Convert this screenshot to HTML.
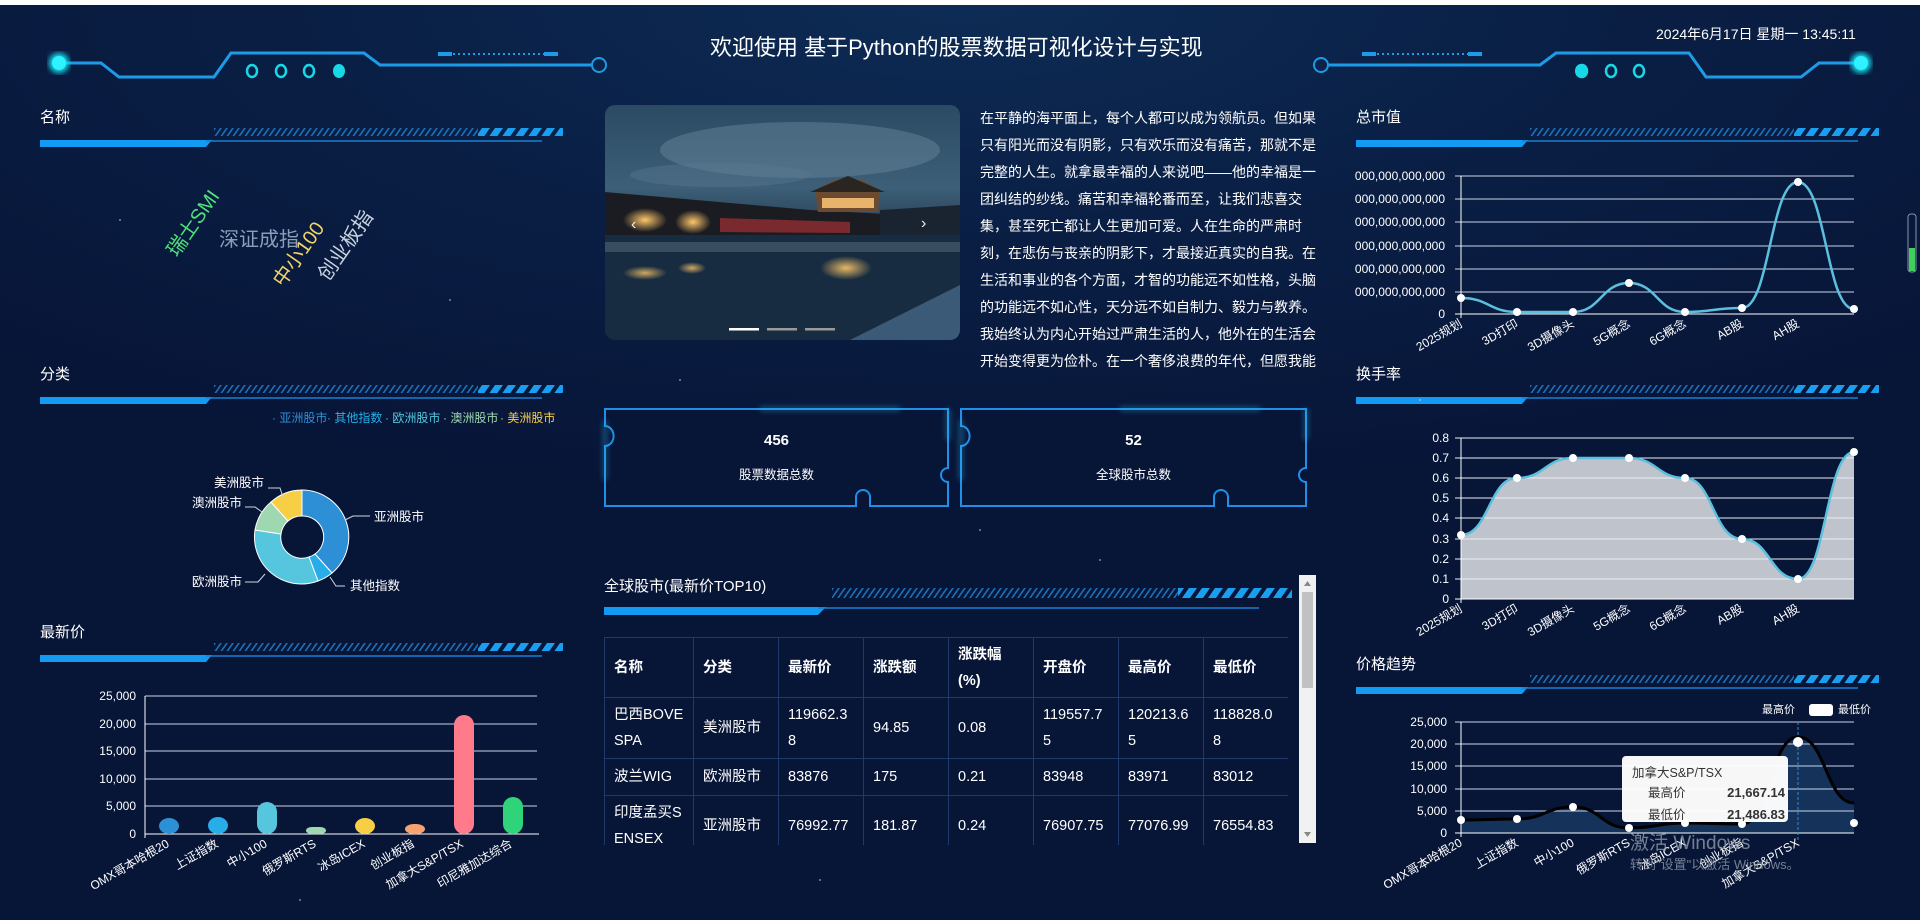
<!DOCTYPE html>
<html><head><meta charset="utf-8"><style>
*{margin:0;padding:0;box-sizing:border-box}
html,body{width:1920px;height:920px;overflow:hidden}
body{background:radial-gradient(ellipse 1400px 500px at 960px 0px,#0d2c55 0%,#0a1f45 45%,#071537 100%);font-family:"Liberation Sans","Noto Sans CJK SC",sans-serif;color:#fff;position:relative}
.a{position:absolute}
.t{position:absolute;font-size:16px;color:#fff;white-space:nowrap}
.para{position:absolute;left:980px;top:105px;width:342px;font-size:14px;line-height:27px;color:#fff}
table{border-collapse:collapse;position:absolute;left:604px;top:637px;width:684px;font-size:14.5px;table-layout:fixed}
td{border:1px solid #1f3a6a;padding:0 9px;color:#fff;vertical-align:middle;line-height:26px;word-break:break-all}
th{border:1px solid #1f3a6a;padding:0 9px;text-align:left;font-weight:bold;line-height:26px}
</style></head><body>
<div class="a" style="left:0;top:0;width:1920px;height:5px;background:#fff"></div>

<svg class="a" style="left:0;top:0" width="1920" height="920" viewBox="0 0 1920 920">
<defs>
<pattern id="hat" width="6" height="10" patternUnits="userSpaceOnUse" patternTransform="skewX(-35)"><rect width="2" height="10" fill="#1a6fb8"/></pattern>
<pattern id="dsh" width="13" height="10" patternUnits="userSpaceOnUse" patternTransform="skewX(-35)"><rect width="8" height="10" fill="#1a9ef0"/></pattern>
<filter id="gl"><feGaussianBlur stdDeviation="3"/></filter>
<linearGradient id="sky" x1="0" y1="0" x2="0" y2="1"><stop offset="0" stop-color="#2b4a63"/><stop offset="0.35" stop-color="#3d5f78"/><stop offset="0.6" stop-color="#1e3448"/><stop offset="1" stop-color="#0f2236"/></linearGradient>
<radialGradient id="lt"><stop offset="0" stop-color="#ffc76a"/><stop offset="1" stop-color="#ffc76a" stop-opacity="0"/></radialGradient>
<clipPath id="ic"><rect x="605" y="105" width="355" height="235" rx="10"/></clipPath>
</defs>

<g fill="none" stroke="#1e9be6" stroke-width="3">
<path d="M59 63 H101 L119 77 H214 L231 53 H364 L380 65 H591"/>
<path d="M1861 63 H1819 L1801 77 H1706 L1689 53 H1556 L1540 65 H1329"/>
</g>
<g fill="none" stroke="#1e9be6" stroke-width="2"><circle cx="599" cy="65" r="7"/><circle cx="1321" cy="65" r="7"/></g>
<g stroke="#1e9be6" stroke-width="2" stroke-dasharray="2 3"><path d="M438 54 H558"/><path d="M1362 54 H1482"/></g>
<g fill="#1e9be6"><rect x="438" y="52" width="14" height="4"/><rect x="544" y="52" width="14" height="4"/><rect x="1362" y="52" width="14" height="4"/><rect x="1468" y="52" width="14" height="4"/></g>
<g fill="none" stroke="#18d8e8" stroke-width="2.5"><ellipse cx="252" cy="71" rx="5" ry="6"/><ellipse cx="281" cy="71" rx="5" ry="6"/><ellipse cx="309" cy="71" rx="5" ry="6"/><ellipse cx="1639" cy="71" rx="5" ry="6"/><ellipse cx="1611" cy="71" rx="5" ry="6"/><ellipse cx="1582" cy="71" rx="5" ry="6"/></g>
<g fill="#18d8e8"><ellipse cx="339" cy="71" rx="6" ry="7"/><ellipse cx="1581" cy="71" rx="6" ry="7"/></g>
<circle cx="59" cy="63" r="10" fill="#18e0f0" filter="url(#gl)"/><circle cx="59" cy="63" r="7" fill="#2ef2ff"/>
<circle cx="1861" cy="63" r="10" fill="#18e0f0" filter="url(#gl)"/><circle cx="1861" cy="63" r="7" fill="#2ef2ff"/>

<g id="bars">
<g transform="translate(40,128)"><rect x="174" y="0" width="264" height="8" fill="url(#hat)"/><rect x="438" y="0" width="85" height="8" fill="url(#dsh)"/><path d="M0 12 H172 L166 19 H0Z" fill="#139af2"/><path d="M166 13 H502" stroke="#1780d0" stroke-width="1.5"/></g>
<g transform="translate(40,385)"><rect x="174" y="0" width="264" height="8" fill="url(#hat)"/><rect x="438" y="0" width="85" height="8" fill="url(#dsh)"/><path d="M0 12 H172 L166 19 H0Z" fill="#139af2"/><path d="M166 13 H502" stroke="#1780d0" stroke-width="1.5"/></g>
<g transform="translate(40,643)"><rect x="174" y="0" width="264" height="8" fill="url(#hat)"/><rect x="438" y="0" width="85" height="8" fill="url(#dsh)"/><path d="M0 12 H172 L166 19 H0Z" fill="#139af2"/><path d="M166 13 H502" stroke="#1780d0" stroke-width="1.5"/></g>
<g transform="translate(1356,128)"><rect x="174" y="0" width="264" height="8" fill="url(#hat)"/><rect x="438" y="0" width="85" height="8" fill="url(#dsh)"/><path d="M0 12 H172 L166 19 H0Z" fill="#139af2"/><path d="M166 13 H502" stroke="#1780d0" stroke-width="1.5"/></g>
<g transform="translate(1356,385)"><rect x="174" y="0" width="264" height="8" fill="url(#hat)"/><rect x="438" y="0" width="85" height="8" fill="url(#dsh)"/><path d="M0 12 H172 L166 19 H0Z" fill="#139af2"/><path d="M166 13 H502" stroke="#1780d0" stroke-width="1.5"/></g>
<g transform="translate(1356,675)"><rect x="174" y="0" width="264" height="8" fill="url(#hat)"/><rect x="438" y="0" width="85" height="8" fill="url(#dsh)"/><path d="M0 12 H172 L166 19 H0Z" fill="#139af2"/><path d="M166 13 H502" stroke="#1780d0" stroke-width="1.5"/></g>
<g transform="translate(604,588)"><rect x="228" y="0" width="346" height="10" fill="url(#hat)"/><rect x="574" y="0" width="114" height="10" fill="url(#dsh)"/><path d="M0 19 H222 L214 27 H0Z" fill="#139af2"/><path d="M214 20 H655" stroke="#1780d0" stroke-width="1.5"/></g>
</g>

<g clip-path="url(#ic)">
<rect x="605" y="105" width="355" height="235" fill="url(#sky)"/>
<ellipse cx="800" cy="150" rx="140" ry="28" fill="#6b8aa0" opacity="0.45"/>
<ellipse cx="720" cy="175" rx="90" ry="12" fill="#5a7a90" opacity="0.4"/>
<path d="M605 192 L810 210 L960 218 V235 H605Z" fill="#1b1c22"/>
<path d="M720 218 L850 222 V233 L720 232Z" fill="#7a2a2e"/>
<path d="M815 190 L835 180 L862 180 L880 190 L878 212 L818 212Z" fill="#6b4a32"/>
<rect x="822" y="198" width="52" height="10" fill="#e9b36b"/>
<path d="M810 192 L848 176 L885 192Z" fill="#2a2520"/>
<path d="M880 210 L960 205 V235 L880 235Z" fill="#1a2430"/>
<ellipse cx="645" cy="220" rx="22" ry="12" fill="url(#lt)"/>
<ellipse cx="693" cy="222" rx="18" ry="12" fill="url(#lt)"/>
<rect x="605" y="235" width="355" height="105" fill="#172c40"/>
<rect x="605" y="242" width="355" height="10" fill="#5a6f80" opacity="0.5"/>
<ellipse cx="645" cy="273" rx="22" ry="7" fill="url(#lt)" opacity="0.8"/>
<ellipse cx="692" cy="268" rx="14" ry="6" fill="url(#lt)" opacity="0.8"/>
<ellipse cx="846" cy="268" rx="26" ry="12" fill="url(#lt)" opacity="0.9"/>
<path d="M850 340 L960 285 V340Z" fill="#3b5a78"/>
<rect x="729" y="328" width="30" height="2.5" fill="#fff"/><rect x="767" y="328" width="30" height="2.5" fill="#999"/><rect x="805" y="328" width="30" height="2.5" fill="#999"/>
<text x="631" y="229" font-size="16" fill="#eee" font-family="Liberation Sans">‹</text>
<text x="921" y="228" font-size="16" fill="#eee" font-family="Liberation Sans">›</text>
</g>

<g fill="#071537" stroke="#1e90e8" stroke-width="2">
<path d="M605 409 H948 V468 A7 7 0 0 0 948 482 V506 H870 V497 A7 7 0 0 0 856 497 V506 H605 V446 A6 7 0 0 0 605 426Z"/>
<path d="M961 409 H1306 V468 A7 7 0 0 0 1306 482 V506 H1228 V497 A7 7 0 0 0 1214 497 V506 H961 V446 A6 7 0 0 0 961 426Z"/>
</g>
<g fill="none" stroke="#35c6ff" stroke-width="3" opacity="0.5" filter="url(#gl)">
<path d="M605 420 V480 M948 409 V440 M760 409 H900 M1306 409 V440 M1120 409 H1260 M961 420 V480"/>
</g>

<g font-family="Liberation Sans,Noto Sans CJK SC,sans-serif">
<text transform="translate(177,258) rotate(-55)" font-size="20" fill="#4fe07a">瑞士SMI</text>
<text x="219" y="246" font-size="20" fill="#8a9fb8">深证成指</text>
<text transform="translate(283,288) rotate(-55)" font-size="20" fill="#f2d36a">中小100</text>
<text transform="translate(328,282) rotate(-55)" font-size="20" fill="#c9d3e0">创业板指</text>
</g>

<g transform="translate(302,537)">
<circle r="34.5" fill="none" stroke-width="25" stroke="#55c6dd"/>
<path d="M0 -47 A47 47 0 0 1 30 36 L13 17 A21 21 0 0 0 0 -21Z" fill="#2d8fd5" stroke="#fff" stroke-width="1"/>
<path d="M30 36 A47 47 0 0 1 16 44 L7 20 A21 21 0 0 0 13 17Z" fill="#27aee8" stroke="#fff" stroke-width="1"/>
<path d="M16 44 A47 47 0 0 1 -47 -7 L-21 -3 A21 21 0 0 0 7 20Z" fill="#55c6dd" stroke="#fff" stroke-width="1"/>
<path d="M-47 -7 A47 47 0 0 1 -31 -35 L-14 -16 A21 21 0 0 0 -21 -3Z" fill="#9fd8b0" stroke="#fff" stroke-width="1"/>
<path d="M-31 -35 A47 47 0 0 1 0 -47 L0 -21 A21 21 0 0 0 -14 -16Z" fill="#f7cf45" stroke="#fff" stroke-width="1"/>
</g>
<g stroke="#cfd8e6" fill="none" stroke-width="1"><path d="M345 520 L353 516 H370"/><path d="M330 577 L336 586 H345"/><path d="M265 574 L258 582 H245"/><path d="M262 512 L255 507 H245"/><path d="M283 497 L280 488 H268"/></g>
<g font-size="12.5" fill="#fff" font-family="Liberation Sans,Noto Sans CJK SC,sans-serif">
<text x="374" y="521">亚洲股市</text><text x="350" y="590">其他指数</text><text x="192" y="586">欧洲股市</text><text x="192" y="507">澳洲股市</text><text x="214" y="487">美洲股市</text>
</g>
<g font-size="12" font-family="Liberation Sans,Noto Sans CJK SC,sans-serif">
<text x="272" y="422" fill="#2d8fd5">· 亚洲股市</text><text x="327" y="422" fill="#27aee8">· 其他指数</text><text x="385" y="422" fill="#55c6dd">· 欧洲股市</text><text x="443" y="422" fill="#9fd8b0">· 澳洲股市</text><text x="500" y="422" fill="#f7cf45">· 美洲股市</text>
</g>

<g stroke="#c9d4ea" stroke-width="1"><path d="M145 696 H537 M145 724 H537 M145 751 H537 M145 779 H537 M145 806 H537"/><path d="M145 834 H539 M145 696 V838" stroke="#fff"/></g>
<g font-size="12" fill="#fff" text-anchor="end" font-family="Liberation Sans,sans-serif"><text x="136" y="700">25,000</text><text x="136" y="728">20,000</text><text x="136" y="755">15,000</text><text x="136" y="783">10,000</text><text x="136" y="810">5,000</text><text x="136" y="838">0</text></g>
<g><rect x="159" y="818" width="20" height="16" rx="10" fill="#2d8fd5"/><rect x="208" y="817" width="20" height="17" rx="10" fill="#27aee8"/><rect x="257" y="802" width="20" height="32" rx="10" fill="#55c6dd"/><rect x="306" y="827" width="20" height="7" rx="6" fill="#9fd8b0"/><rect x="355" y="818" width="20" height="16" rx="10" fill="#f7cf45"/><rect x="405" y="824" width="20" height="10" rx="9" fill="#f9a271"/><rect x="454" y="715" width="20" height="119" rx="10" fill="#ff7b8c"/><rect x="503" y="797" width="20" height="37" rx="10" fill="#2fd47a"/></g>
<g font-size="12" fill="#fff" text-anchor="end" font-family="Liberation Sans,Noto Sans CJK SC,sans-serif">
<text transform="translate(170,846) rotate(-30)">OMX哥本哈根20</text><text transform="translate(219,846) rotate(-30)">上证指数</text><text transform="translate(268,846) rotate(-30)">中小100</text><text transform="translate(317,846) rotate(-30)">俄罗斯RTS</text><text transform="translate(366,846) rotate(-30)">冰岛ICEX</text><text transform="translate(415,846) rotate(-30)">创业板指</text><text transform="translate(464,846) rotate(-30)">加拿大S&amp;P/TSX</text><text transform="translate(513,846) rotate(-30)">印尼雅加达综合</text>
</g>

<g stroke="#c9d4ea" stroke-width="1"><path d="M1455 176 H1854 M1455 199 H1854 M1455 222 H1854 M1455 246 H1854 M1455 269 H1854 M1455 292 H1854"/><path d="M1455 314 H1854 M1461 176 V318" stroke="#fff"/></g>
<g font-size="12" fill="#fff" text-anchor="end" font-family="Liberation Sans,sans-serif"><text x="1445" y="180">000,000,000,000</text><text x="1445" y="203">000,000,000,000</text><text x="1445" y="226">000,000,000,000</text><text x="1445" y="250">000,000,000,000</text><text x="1445" y="273">000,000,000,000</text><text x="1445" y="296">000,000,000,000</text><text x="1445" y="318">0</text></g>
<path d="M1461 298 C1489 298 1489 312 1517 312 C1545 312 1545 312 1573 312 C1601 312 1601 283 1629 283 C1657 283 1657 312 1685 312 C1713 312 1713 308 1742 308 C1770 308 1770 182 1798 182 C1826 182 1826 309 1854 309" fill="none" stroke="#5bc0de" stroke-width="2.5"/>
<g fill="#fff"><circle cx="1461" cy="298" r="4"/><circle cx="1517" cy="312" r="4"/><circle cx="1573" cy="312" r="4"/><circle cx="1629" cy="283" r="4"/><circle cx="1685" cy="312" r="4"/><circle cx="1742" cy="308" r="4"/><circle cx="1798" cy="182" r="4"/><circle cx="1854" cy="309" r="4"/></g>

<path d="M1461 535 C1489 535 1489 478 1517 478 C1545 478 1545 458 1573 458 C1601 458 1601 458 1629 458 C1657 458 1657 478 1685 478 C1713 478 1713 539 1742 539 C1770 539 1770 579 1798 579 C1826 579 1826 452 1854 452 V599 H1461Z" fill="#bfc3cc"/>
<g stroke="#e8edf5" stroke-width="1"><path d="M1455 438 H1854 M1455 458 H1854 M1455 478 H1854 M1455 498 H1854 M1455 518 H1854 M1455 539 H1854 M1455 559 H1854 M1455 579 H1854"/><path d="M1455 599 H1854 M1461 438 V603" stroke="#fff"/></g>
<path d="M1461 535 C1489 535 1489 478 1517 478 C1545 478 1545 458 1573 458 C1601 458 1601 458 1629 458 C1657 458 1657 478 1685 478 C1713 478 1713 539 1742 539 C1770 539 1770 579 1798 579 C1826 579 1826 452 1854 452" fill="none" stroke="#5bc0de" stroke-width="2.5"/>
<g fill="#fff"><circle cx="1461" cy="535" r="4"/><circle cx="1517" cy="478" r="4"/><circle cx="1573" cy="458" r="4"/><circle cx="1629" cy="458" r="4"/><circle cx="1685" cy="478" r="4"/><circle cx="1742" cy="539" r="4"/><circle cx="1798" cy="579" r="4"/><circle cx="1854" cy="452" r="4"/></g>
<g font-size="12" fill="#fff" text-anchor="end" font-family="Liberation Sans,sans-serif"><text x="1449" y="442">0.8</text><text x="1449" y="462">0.7</text><text x="1449" y="482">0.6</text><text x="1449" y="502">0.5</text><text x="1449" y="522">0.4</text><text x="1449" y="543">0.3</text><text x="1449" y="563">0.2</text><text x="1449" y="583">0.1</text><text x="1449" y="603">0</text></g>

<path d="M1461 820 C1489 820 1489 819 1517 819 C1545 819 1545 807 1573 807 C1601 807 1601 828 1629 828 C1657 828 1657 823 1685 823 C1713 823 1713 824 1742 824 C1770 824 1770 737 1798 737 C1826 737 1826 803 1854 803 V833 H1461Z" fill="#16355e" opacity="0.9"/>
<g stroke="#c9d4ea" stroke-width="1"><path d="M1455 722 H1854 M1455 744 H1854 M1455 766 H1854 M1455 789 H1854 M1455 811 H1854"/><path d="M1455 833 H1854 M1461 722 V837" stroke="#fff"/></g>
<path d="M1798 722 V840" stroke="#2f8fd0" stroke-dasharray="3 2"/>
<path d="M1461 820 C1489 820 1489 819 1517 819 C1545 819 1545 807 1573 807 C1601 807 1601 828 1629 828 C1657 828 1657 823 1685 823 C1713 823 1713 824 1742 824 C1770 824 1770 737 1798 737 C1826 737 1826 803 1854 803" fill="none" stroke="#000" stroke-width="3"/>
<g fill="#fff"><circle cx="1461" cy="820" r="4"/><circle cx="1517" cy="819" r="4"/><circle cx="1573" cy="807" r="4"/><circle cx="1629" cy="828" r="4"/><circle cx="1685" cy="823" r="4"/><circle cx="1742" cy="824" r="4"/><circle cx="1798" cy="742" r="5"/><circle cx="1854" cy="823" r="4"/></g>
<g font-size="12" fill="#fff" text-anchor="end" font-family="Liberation Sans,sans-serif"><text x="1447" y="726">25,000</text><text x="1447" y="748">20,000</text><text x="1447" y="770">15,000</text><text x="1447" y="793">10,000</text><text x="1447" y="815">5,000</text><text x="1447" y="837">0</text></g>
<g font-size="11" fill="#fff" font-family="Liberation Sans,Noto Sans CJK SC,sans-serif"><text x="1762" y="713">最高价</text><rect x="1809" y="704" width="24" height="12" rx="3" fill="#fff"/><text x="1838" y="713">最低价</text></g>
<rect x="1622" y="756" width="166" height="66" rx="4" fill="#fff" opacity="0.97"/>
<g font-family="Liberation Sans,Noto Sans CJK SC,sans-serif" fill="#333"><text x="1632" y="777" font-size="12.5">加拿大S&amp;P/TSX</text><text x="1648" y="797" font-size="12.5">最高价</text><text x="1785" y="797" font-size="13" font-weight="bold" text-anchor="end">21,667.14</text><text x="1648" y="819" font-size="12.5">最低价</text><text x="1785" y="819" font-size="13" font-weight="bold" text-anchor="end">21,486.83</text></g>

<rect x="1299" y="575" width="17" height="268" fill="#f1f1f1"/><rect x="1302" y="592" width="11" height="96" fill="#c1c1c1"/>
<path d="M1304 586 L1307.5 581 L1311 586Z M1304 832 L1307.5 837 L1311 832Z" fill="#888"/>
<rect x="1908" y="214" width="8" height="58" rx="3" fill="none" stroke="#8a96a8" stroke-width="1"/><rect x="1909" y="248" width="6" height="23" fill="#3fcf5a"/>
</svg>

<div class="t" style="left:710px;top:30px;font-size:22px">欢迎使用 基于Python的股票数据可视化设计与实现</div>
<div class="t" style="left:1656px;top:24px;font-size:14px">2024年6月17日 星期一 13:45:11</div>
<div class="t" style="left:40px;top:106px;font-size:15px">名称</div>
<div class="t" style="left:40px;top:363px;font-size:15px">分类</div>
<div class="t" style="left:40px;top:621px;font-size:15px">最新价</div>
<div class="t" style="left:1356px;top:106px;font-size:15px">总市值</div>
<div class="t" style="left:1356px;top:363px;font-size:15px">换手率</div>
<div class="t" style="left:1356px;top:653px;font-size:15px">价格趋势</div>
<div class="t" style="left:604px;top:575px;font-size:15px">全球股市(最新价TOP10)</div>
<div class="t" style="left:604px;top:432px;width:345px;text-align:center;font-size:15px;font-weight:bold">456</div>
<div class="t" style="left:604px;top:464px;width:345px;text-align:center;font-size:12.5px">股票数据总数</div>
<div class="t" style="left:961px;top:432px;width:345px;text-align:center;font-size:15px;font-weight:bold">52</div>
<div class="t" style="left:961px;top:464px;width:345px;text-align:center;font-size:12.5px">全球股市总数</div>
<div class="para">在平静的海平面上，每个人都可以成为领航员。但如果只有阳光而没有阴影，只有欢乐而没有痛苦，那就不是完整的人生。就拿最幸福的人来说吧——他的幸福是一团纠结的纱线。痛苦和幸福轮番而至，让我们悲喜交集，甚至死亡都让人生更加可爱。人在生命的严肃时刻，在悲伤与丧亲的阴影下，才最接近真实的自我。在生活和事业的各个方面，才智的功能远不如性格，头脑的功能远不如心性，天分远不如自制力、毅力与教养。我始终认为内心开始过严肃生活的人，他外在的生活会开始变得更为俭朴。在一个奢侈浪费的年代，但愿我能</div>

<div class="a" style="left:604px;top:637px;width:684px;height:208px;overflow:hidden">
<table style="left:0;top:0">
<colgroup><col style="width:89px"><col style="width:85px"><col style="width:85px"><col style="width:85px"><col style="width:85px"><col style="width:85px"><col style="width:85px"><col style="width:85px"></colgroup>
<tr style="height:60px"><th>名称</th><th>分类</th><th>最新价</th><th>涨跌额</th><th>涨跌幅<br>(%)</th><th>开盘价</th><th>最高价</th><th>最低价</th></tr>
<tr style="height:61px"><td>巴西BOVE<br>SPA</td><td>美洲股市</td><td>119662.3<br>8</td><td>94.85</td><td>0.08</td><td>119557.7<br>5</td><td>120213.6<br>5</td><td>118828.0<br>8</td></tr>
<tr style="height:37px"><td>波兰WIG</td><td>欧洲股市</td><td>83876</td><td>175</td><td>0.21</td><td>83948</td><td>83971</td><td>83012</td></tr>
<tr style="height:61px"><td>印度孟买S<br>ENSEX</td><td>亚洲股市</td><td>76992.77</td><td>181.87</td><td>0.24</td><td>76907.75</td><td>77076.99</td><td>76554.83</td></tr>
</table></div>

<svg class="a" style="left:0;top:0" width="1920" height="920">
<g font-size="12" fill="#fff" text-anchor="end" font-family="Liberation Sans,Noto Sans CJK SC,sans-serif">
<text transform="translate(1463,326) rotate(-30)">2025规划</text><text transform="translate(1519,326) rotate(-30)">3D打印</text><text transform="translate(1575,326) rotate(-30)">3D摄像头</text><text transform="translate(1631,326) rotate(-30)">5G概念</text><text transform="translate(1687,326) rotate(-30)">6G概念</text><text transform="translate(1744,326) rotate(-30)">AB股</text><text transform="translate(1800,326) rotate(-30)">AH股</text>
<text transform="translate(1463,611) rotate(-30)">2025规划</text><text transform="translate(1519,611) rotate(-30)">3D打印</text><text transform="translate(1575,611) rotate(-30)">3D摄像头</text><text transform="translate(1631,611) rotate(-30)">5G概念</text><text transform="translate(1687,611) rotate(-30)">6G概念</text><text transform="translate(1744,611) rotate(-30)">AB股</text><text transform="translate(1800,611) rotate(-30)">AH股</text>
<text transform="translate(1463,845) rotate(-30)">OMX哥本哈根20</text><text transform="translate(1519,845) rotate(-30)">上证指数</text><text transform="translate(1575,845) rotate(-30)">中小100</text><text transform="translate(1631,845) rotate(-30)">俄罗斯RTS</text><text transform="translate(1687,845) rotate(-30)">冰岛ICEX</text><text transform="translate(1744,845) rotate(-30)">创业板指</text><text transform="translate(1800,845) rotate(-30)">加拿大S&amp;P/TSX</text>
</g>
<g font-family="Liberation Sans,Noto Sans CJK SC,sans-serif" fill="#9aa4b4" opacity="0.75"><text x="1630" y="849" font-size="19">激活 Windows</text><text x="1630" y="869" font-size="13">转到"设置"以激活 Windows。</text></g>
<g fill="#c8d4e8" opacity="0.6"><circle cx="120" cy="220" r="1"/><circle cx="450" cy="300" r="1"/><circle cx="680" cy="380" r="1"/><circle cx="1100" cy="560" r="1"/><circle cx="980" cy="530" r="1"/><circle cx="1420" cy="400" r="1"/><circle cx="300" cy="900" r="1"/><circle cx="820" cy="880" r="1"/></g>
</svg>
</body></html>
